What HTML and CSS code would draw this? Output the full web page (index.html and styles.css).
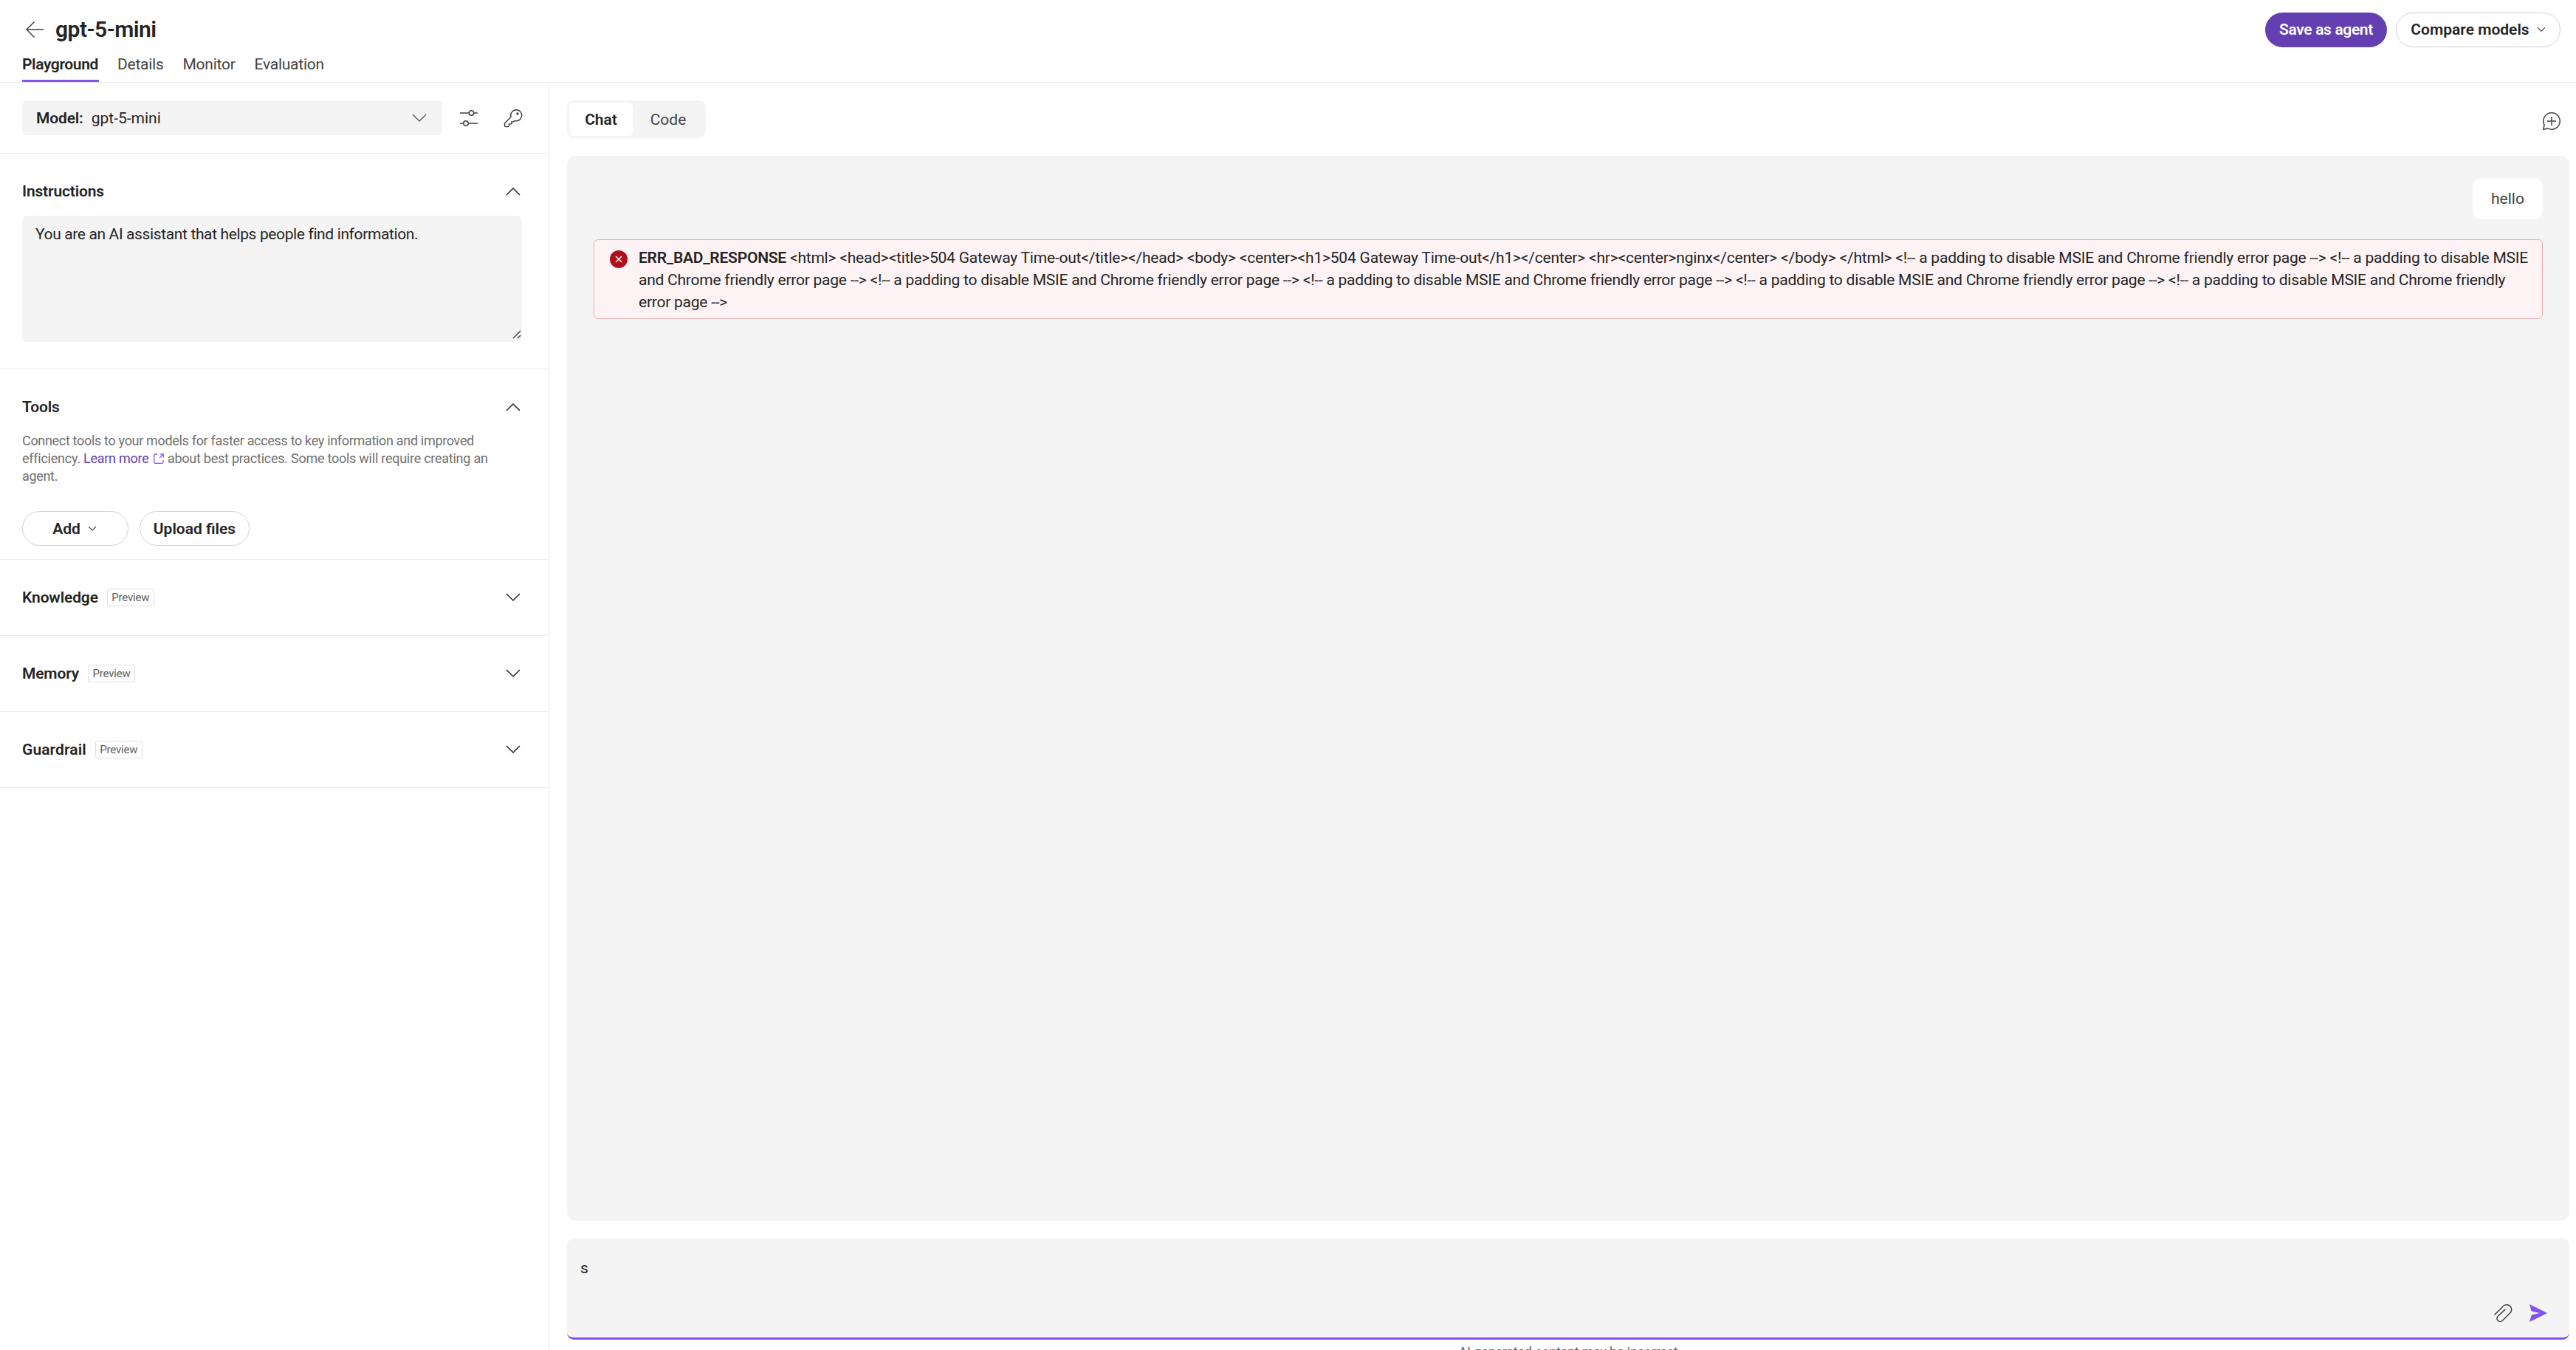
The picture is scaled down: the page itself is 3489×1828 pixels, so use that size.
FILE: index.html
```html
<!DOCTYPE html>
<html lang="en">
<head>
    <meta charset="UTF-8">
    <meta name="viewport" content="width=device-width, initial-scale=1.0">
    <title>gpt-5-mini</title>
    <link rel="stylesheet" href="styles.css">
</head>
<body>
    <header class="header">
        <div class="title-row">
            <svg class="back" width="24" height="24" viewBox="0 0 24 24"><path d="M24 12H1M11.5 1.5L1 12l10.5 10.5"/></svg>
            <h1>gpt-5-mini</h1>
            <div class="header-actions">
                <button class="btn btn-primary">Save as agent</button>
                <button class="btn btn-compare">Compare models
                    <svg width="12" height="8" viewBox="0 0 12 8"><path d="M1 1.2l5 5 5-5"/></svg>
                </button>
            </div>
        </div>
        <nav class="tabs">
            <a class="tab active">Playground</a>
            <a class="tab">Details</a>
            <a class="tab">Monitor</a>
            <a class="tab">Evaluation</a>
        </nav>
    </header>

    <div class="main">
        <aside class="sidebar">
            <div class="model-row">
                <div class="select">
                    <b>Model:</b>
                    <span>gpt-5-mini</span>
                    <svg class="chevron" width="20" height="12" viewBox="0 0 20 12"><path d="M1 1l9 9 9-9"/></svg>
                </div>
                <svg class="icon" width="26" height="26" viewBox="0 0 26 26">
                    <path d="M1 6h12M20 6h5M1 20h5M12 20h13"/>
                    <circle cx="16.5" cy="6" r="3.2"/>
                    <circle cx="9" cy="20" r="3.2"/>
                </svg>
                <svg class="icon" width="26" height="26" viewBox="0 0 26 26">
                    <path d="M17.2 1.8a7.7 7.7 0 0 0-7.3 9.8L2 19.5a1.6 1.6 0 0 0-.5 1.1V23c0 .8.6 1.4 1.4 1.4h3.3c.7 0 1.3-.6 1.3-1.3v-2.2h2.2c.7 0 1.2-.5 1.2-1.2V18h2c.6 0 .9-.2 1.2-.7l.8-.8c.7.2 1.5.3 2.3.3a7.5 7.5 0 0 0 0-15z"/>
                    <circle class="dot" cx="19" cy="7" r="1.7"/>
                </svg>
            </div>

            <section class="section instructions">
                <div class="section-head">
                    <h2>Instructions</h2>
                    <svg class="chevron" width="20" height="12" viewBox="0 0 20 12"><path d="M1 11l9-9 9 9"/></svg>
                </div>
                <div class="textarea">
                    You are an AI assistant that helps people find information.
                    <svg class="resize" width="12" height="12" viewBox="0 0 12 12"><path d="M1 11L11 1M7 11l4-4"/></svg>
                </div>
            </section>

            <section class="section tools">
                <div class="section-head">
                    <h2>Tools</h2>
                    <svg class="chevron" width="20" height="12" viewBox="0 0 20 12"><path d="M1 11l9-9 9 9"/></svg>
                </div>
                <p class="hint">Connect tools to your models for faster access to key information and improved<br><span class="hint-link">efficiency. <a>Learn more <svg width="14" height="14" viewBox="0 0 14 14"><path d="M5 1H2.5A1.8 1.8 0 0 0 .7 2.8v8.7a1.8 1.8 0 0 0 1.8 1.8h8.7a1.8 1.8 0 0 0 1.8-1.8V9M8.5.8h4.7v4.7M13 1L8.3 5.7"/></svg></a> about best practices. Some tools will require creating an</span><br>agent.</p>
                <div class="buttons">
                    <button class="btn btn-add">Add
                        <svg width="12" height="8" viewBox="0 0 12 8"><path d="M1 1.2l5 5 5-5"/></svg>
                    </button>
                    <button class="btn btn-upload">Upload files</button>
                </div>
            </section>

            <section class="section collapsed">
                <h2>Knowledge</h2><span class="badge">Preview</span>
                <svg class="chevron" width="20" height="12" viewBox="0 0 20 12"><path d="M1 1l9 9 9-9"/></svg>
            </section>
            <section class="section collapsed">
                <h2>Memory</h2><span class="badge">Preview</span>
                <svg class="chevron" width="20" height="12" viewBox="0 0 20 12"><path d="M1 1l9 9 9-9"/></svg>
            </section>
            <section class="section collapsed">
                <h2 class="wide">Guardrail</h2><span class="badge">Preview</span>
                <svg class="chevron" width="20" height="12" viewBox="0 0 20 12"><path d="M1 1l9 9 9-9"/></svg>
            </section>
        </aside>

        <main class="content">
            <div class="toolbar">
                <div class="toggle">
                    <span class="toggle-item selected">Chat</span>
                    <span class="toggle-item">Code</span>
                </div>
                <svg class="icon new-chat" width="26" height="26" viewBox="0 0 26 26">
                    <path d="M13 1.8a11.2 11.2 0 1 1-5.2 21.1L1.8 24.2l1.3-6A11.200 11.200 0 0 1 13 1.8zM13 7v12M7 13h12"/>
                </svg>
            </div>

            <div class="chat">
                <div class="bubble">hello</div>
                <div class="error">
                    <svg width="24" height="24" viewBox="0 0 24 24"><circle cx="12" cy="12" r="12"/><path d="M8 8l8 8M16 8l-8 8"/></svg>
                    <p><b>ERR_BAD_RESPONSE</b> <span class="line-1">&lt;html&gt; &lt;head&gt;&lt;title&gt;504 Gateway Time-out&lt;/title&gt;&lt;/head&gt; &lt;body&gt; &lt;center&gt;&lt;h1&gt;504 Gateway Time-out&lt;/h1&gt;&lt;/center&gt; &lt;hr&gt;&lt;center&gt;nginx&lt;/center&gt; &lt;/body&gt; &lt;/html&gt; &lt;!-- a padding to disable MSIE and Chrome friendly error page --&gt; &lt;!-- a padding to disable MSIE</span><br>and Chrome friendly error page --&gt; &lt;!-- a padding to disable MSIE and Chrome friendly error page --&gt; &lt;!-- a padding to disable MSIE and Chrome friendly error page --&gt; &lt;!-- a padding to disable MSIE and Chrome friendly error page --&gt; &lt;!-- a padding to disable MSIE and Chrome friendly<br>error page --&gt;</p>
                </div>
            </div>

            <div class="composer">
                <div class="composer-text">s</div>
                <div class="composer-actions">
                    <svg class="icon" width="26" height="28" viewBox="0 0 26 28">
                        <path d="M1.5 16.5L13.8 4.2a6.6 6.6 0 0 1 9.3 9.3L12.300 24.300a4.300 4.300 0 0 1-6.100-6.100L16.300 8.900"/>
                    </svg>
                    <svg class="send" width="24" height="24" viewBox="0 0 24 24"><path d="M0 0l24 12L0 24l2.800-9.600L14 12 2.800 9.600z"/></svg>
                </div>
            </div>
            <div class="disclaimer">AI-generated content may be incorrect</div>
        </main>
    </div>
</body>
</html>
```
FILE: styles.css
```css
* {
    box-sizing: border-box;
}
body {
    margin: 0;
    height: 1828px;
    overflow: hidden;
    display: flex;
    flex-direction: column;
    font-family: Roboto, "Liberation Sans", sans-serif;
    font-size: 21px;
    line-height: 30px;
    color: #242424;
    background-color: #fff;
}
h1, h2, p {
    margin: 0;
}
b, h1, h2 {
    font-weight: 600;
}
svg {
    flex: none;
    fill: none;
    stroke: #424242;
    stroke-width: 1.5;
}

/* Header */
.header {
    height: 112px;
    flex: none;
    padding: 16px 21px 0 30px;
    border-bottom: 1px solid #ebebeb;
}
.title-row {
    display: flex;
    align-items: center;
    height: 48px;
}
.back {
    margin: 0 16px 0 5px;
}
h1 {
    font-size: 30px;
    letter-spacing: -0.5px;
}
.header-actions {
    display: flex;
    gap: 12px;
    margin-left: auto;
}
.btn {
    display: flex;
    align-items: center;
    justify-content: center;
    height: 47px;
    padding: 0;
    border: 1px solid #d1d1d1;
    border-radius: 24px;
    background-color: #fff;
    color: #242424;
    font-family: inherit;
    font-size: 21px;
    font-weight: 600;
}
.btn svg {
    stroke-width: 1.2;
}
.btn-primary {
    width: 165px;
    border: none;
    background-color: #643fb2;
    color: #fff;
    letter-spacing: -0.35px;
}
.btn-compare {
    width: 223px;
    gap: 10px;
}
.tabs {
    display: flex;
    gap: 26px;
    height: 47px;
}
.tab {
    padding-top: 8px;
    color: #424242;
    letter-spacing: -0.25px;
}
.tab.active {
    width: 104px;
    margin-right: -1px;
    border-bottom: 3px solid #8251ee;
    border-radius: 1px;
    color: #242424;
    font-weight: 600;
    letter-spacing: -0.37px;
}

/* Left settings panel */
.main {
    display: flex;
    flex: 1;
    min-height: 0;
}
.sidebar {
    width: 744px;
    flex: none;
    border-right: 1px solid #ebebeb;
}
.model-row {
    display: flex;
    align-items: center;
    height: 96px;
    padding: 0 35px 0 30px;
    border-bottom: 1px solid #ebebeb;
}
.select {
    display: flex;
    align-items: center;
    width: 569px;
    height: 47px;
    margin-right: 23px;
    padding: 0 21px 0 19px;
    border-radius: 6px;
    background-color: #f4f4f4;
}
.select b {
    margin-right: 11px;
    letter-spacing: -0.15px;
}
.select .chevron {
    stroke: #616161;
}
.icon + .icon {
    margin-left: 34px;
}
.dot {
    fill: #424242;
    stroke: none;
}
.chevron {
    margin-left: auto;
}
.section {
    padding: 0 38px 0 30px;
    border-bottom: 1px solid #ebebeb;
}
.section-head {
    display: flex;
    align-items: center;
    width: 677px;
    padding-right: 2px;
}
h2 {
    font-size: 21px;
    letter-spacing: -0.15px;
}
h2.wide {
    letter-spacing: 0.1px;
}
.section .chevron {
    stroke: #242424;
}
.instructions {
    height: 292px;
    padding-top: 36px;
}
.textarea {
    position: relative;
    width: 677px;
    height: 171px;
    margin-top: 18px;
    padding: 10px 18px;
    border-radius: 6px;
    background-color: #f4f4f4;
    letter-spacing: -0.37px;
}
.resize {
    position: absolute;
    right: 1px;
    bottom: 4px;
}
.tools {
    height: 258px;
    padding-top: 36px;
}
.hint {
    margin-top: 19px;
    font-size: 18px;
    line-height: 24px;
    letter-spacing: -0.32px;
    color: #707070;
    white-space: nowrap;
}
.hint-link {
    letter-spacing: -0.25px;
}
.hint a {
    color: #643fb2;
}
.hint svg {
    margin: 0 1px 0 2px;
    vertical-align: -1px;
    stroke: #8251ee;
    stroke-width: 1.3;
}
.buttons {
    display: flex;
    gap: 15px;
    margin-top: 35px;
}
.btn-add {
    width: 144px;
    gap: 10px;
    padding-right: 2px;
}
.btn-upload {
    width: 149px;
}
.collapsed {
    display: flex;
    align-items: center;
    height: 103px;
}
.badge {
    width: 64px;
    height: 24px;
    margin-left: 12px;
    border: 1px solid #e0e0e0;
    border-radius: 3px;
    font-size: 15px;
    line-height: 22px;
    letter-spacing: -0.2px;
    text-align: center;
    color: #616161;
}

/* Chat area */
.content {
    display: flex;
    flex: 1;
    flex-direction: column;
    min-width: 0;
    padding: 24px 9px 0 24px;
}
.toolbar {
    display: flex;
    align-items: center;
    height: 51px;
    flex: none;
}
.toggle {
    display: flex;
    width: 188px;
    height: 51px;
    padding: 3px;
    border-radius: 9px;
    background-color: #f4f4f4;
}
.toggle-item {
    width: 97px;
    line-height: 46px;
    text-align: center;
    color: #424242;
}
.toggle-item.selected {
    width: 87px;
    border-radius: 6px;
    background-color: #fff;
    color: #242424;
    font-weight: 600;
}
.new-chat {
    margin: 4px 11px 0 auto;
}
.chat {
    display: flex;
    flex-direction: column;
    height: 1442px;
    flex: none;
    margin-top: 24px;
    padding: 30px 36px;
    border-radius: 12px;
    background-color: #f4f4f4;
}
.bubble {
    align-self: flex-end;
    width: 95px;
    height: 56px;
    border-radius: 12px;
    background-color: #fff;
    line-height: 56px;
    text-align: center;
    color: #424242;
}
.error {
    display: flex;
    height: 108px;
    margin-top: 27px;
    padding: 9px 0 0 21px;
    border: 1px solid #eeacb2;
    border-radius: 6px;
    background-color: #fdf3f4;
    letter-spacing: -0.24px;
    white-space: nowrap;
}
.line-1 {
    letter-spacing: -0.21px;
}
.error svg {
    margin: 5px 15px 0 0;
    stroke: #fff;
}
.error circle {
    fill: #b10e1c;
    stroke: none;
}
.composer {
    display: flex;
    flex-direction: column;
    justify-content: space-between;
    height: 137px;
    flex: none;
    margin-top: 24px;
    padding: 25px 30px 19px 18px;
    border-bottom: 3px solid #8251ee;
    border-radius: 9px;
    background-color: #f4f4f4;
}
.composer-actions {
    display: flex;
    align-items: center;
    justify-content: flex-end;
    gap: 23px;
}
.send {
    fill: #8251ee;
    stroke: none;
}
.disclaimer {
    margin-top: 5px;
    font-size: 18px;
    line-height: 24px;
    letter-spacing: -0.22px;
    text-align: center;
    color: #616161;
}
```
